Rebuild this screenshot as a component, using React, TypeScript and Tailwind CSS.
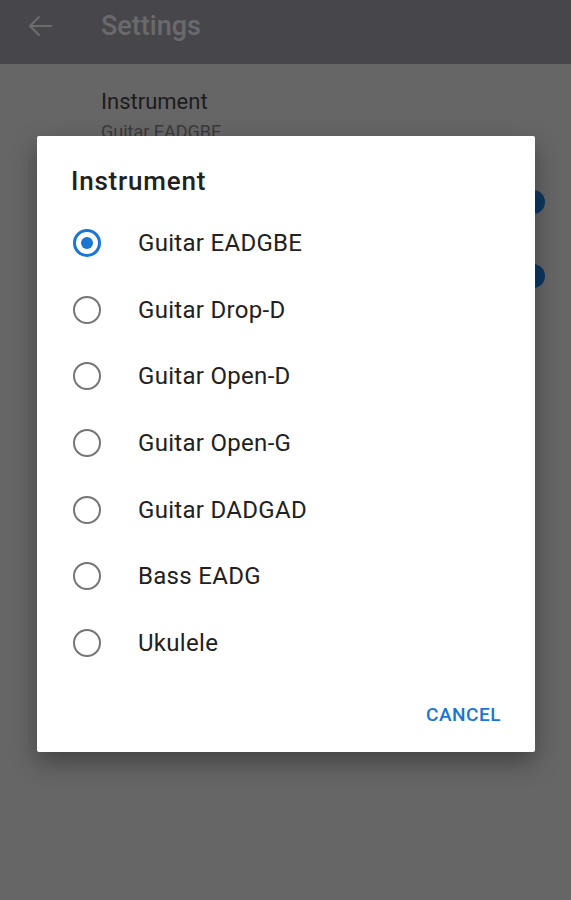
import React from "react";

const options = [
  "Guitar EADGBE",
  "Guitar Drop-D",
  "Guitar Open-D",
  "Guitar Open-G",
  "Guitar DADGAD",
  "Bass EADG",
  "Ukulele",
];

function Radio({ checked }: { checked: boolean }) {
  return (
    <div
      className={
        checked
          ? "flex h-[28px] w-[28px] items-center justify-center rounded-full border-[3px] border-[#1976d2]"
          : "flex h-[28px] w-[28px] items-center justify-center rounded-full border-[2.5px] border-[#757575]"
      }
    >
      {checked && <div className="h-[12px] w-[12px] rounded-full bg-[#1976d2]" />}
    </div>
  );
}

export default function App() {
  return (
    <div
      className="relative h-[900px] w-full overflow-hidden bg-[#666666]"
      style={{ fontFamily: "Roboto, 'Noto Sans', sans-serif" }}
    >
      <div className="flex h-16 items-center bg-[#47474b] pb-[12px]">
        <svg width="26" height="24" viewBox="0 0 26 24" className="ml-[27px]" fill="none" stroke="#6b6b6e" strokeWidth="2.2">
          <path d="M25 12H3M12.5 2.5L3 12l9.5 9.5" />
        </svg>
        <span className="ml-[48px] text-[27px] font-medium text-[#6a6a6d]">Settings</span>
      </div>
      <div className="relative">
        <div className="pl-[101px] pt-[24px]">
          <div className="text-[22px] leading-[28px] text-[#1c1c1c]">Instrument</div>
          <div className="mt-[4px] text-[18px] leading-[24px] text-[#3a3a3a]">Guitar EADGBE</div>
        </div>
        <div className="absolute left-[521px] top-[126px] h-[24px] w-[24px] rounded-full bg-[#0c3860]" />
        <div className="absolute left-[521px] top-[200px] h-[24px] w-[24px] rounded-full bg-[#0c3860]" />
      </div>

      <div className="absolute left-[37px] top-[136px] w-[498px] rounded-[2px] bg-white shadow-[0_10px_24px_rgba(0,0,0,0.35)]">
        <div className="pl-[34px] pt-[30px] text-[26px] font-medium leading-[30px] tracking-[0.8px] text-[#212121]">
          Instrument
        </div>
        <div className="mt-[14px] flex flex-col">
          {options.map((o, i) => (
            <div key={o} className="flex h-[66.6px] items-center">
              <div className="ml-[36px]">
                <Radio checked={i === 0} />
              </div>
              <span className="ml-[37px] text-[24px] tracking-[0.3px] text-[#212121]">{o}</span>
            </div>
          ))}
        </div>
        <div className="flex justify-end pb-[25px] pr-[34px] pt-[27px]">
          <span className="text-[19px] font-medium leading-[24px] tracking-[0.5px] text-[#1976d2]">CANCEL</span>
        </div>
      </div>
    </div>
  );
}
